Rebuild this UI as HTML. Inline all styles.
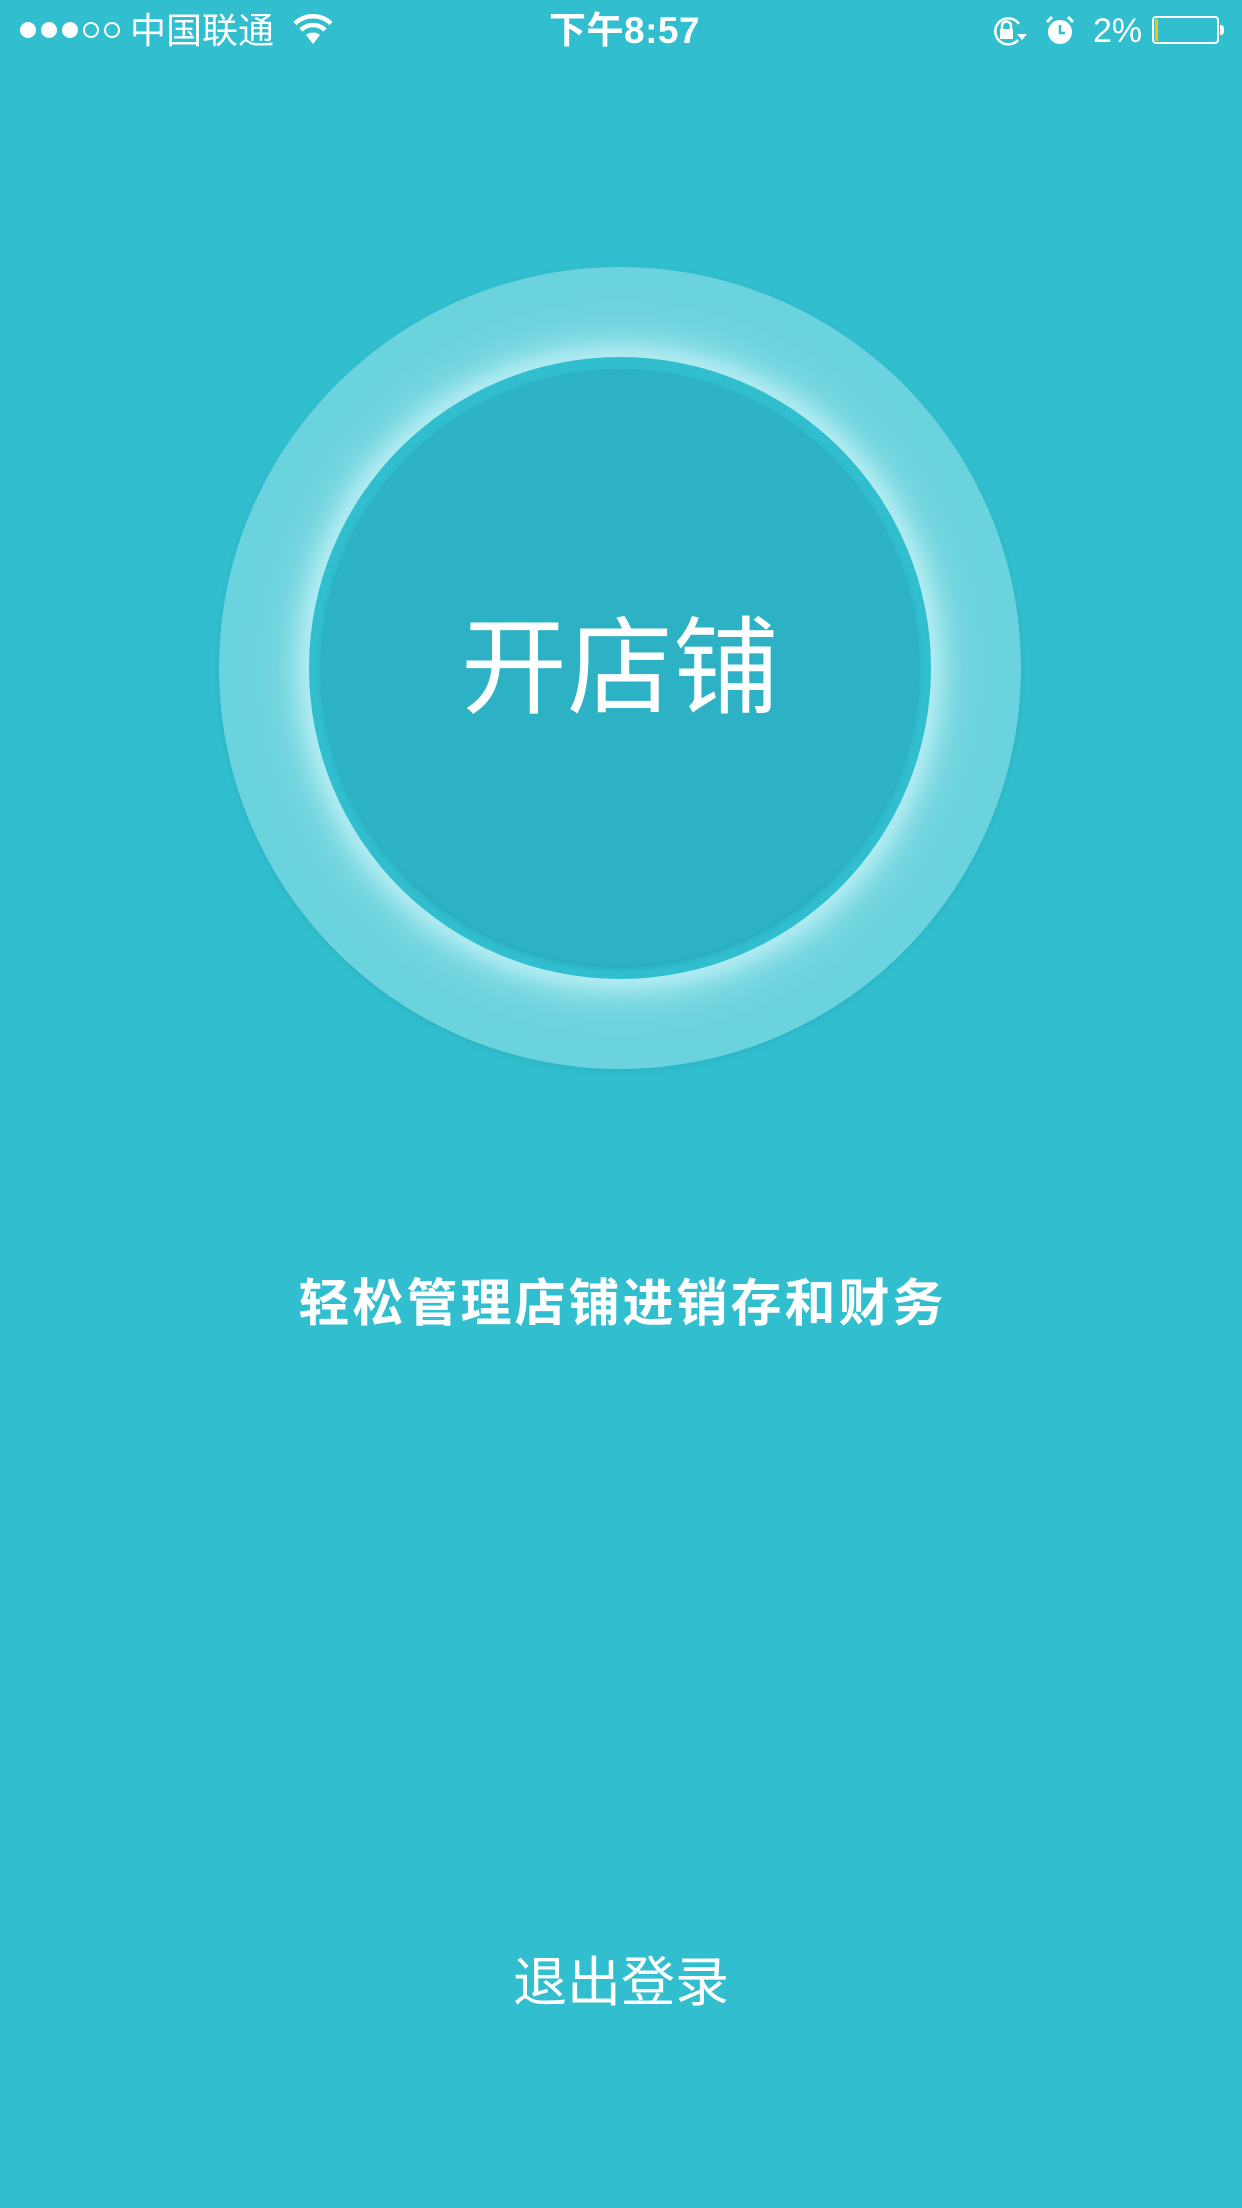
<!DOCTYPE html>
<html><head><meta charset="utf-8"><style>
html,body{margin:0;padding:0;}
body{width:1242px;height:2208px;background:#31bece;position:relative;overflow:hidden;font-family:"Liberation Sans","Noto Sans CJK SC",sans-serif;color:#fff;}
.abs{position:absolute;}
.dot{position:absolute;top:22px;width:16px;height:16px;border-radius:50%;box-sizing:border-box;}
.f{background:#fff;}
.e{border:2px solid #fff;}
</style></head><body>
<div class="dot f" style="left:20px"></div>
<div class="dot f" style="left:41px"></div>
<div class="dot f" style="left:62px"></div>
<div class="dot e" style="left:83px"></div>
<div class="dot e" style="left:104px"></div>
<div class="abs" style="left:130px;top:9px;font-size:36px;line-height:44px;">中国联通</div>
<svg class="abs" style="left:292px;top:14px" width="42" height="32" viewBox="0 0 42 32">
<path d="M21 30 L14 21 A11 11 0 0 1 28 21 Z" fill="#fff"/>
<path d="M9 16 A17 17 0 0 1 33 16" stroke="#fff" stroke-width="4.5" fill="none"/>
<path d="M3 9.5 A26 26 0 0 1 39 9.5" stroke="#fff" stroke-width="4.5" fill="none"/>
</svg>
<div class="abs" style="left:549px;top:9px;font-size:37px;line-height:44px;width:170px;font-weight:bold;letter-spacing:0.5px;">下午8:57</div>
<svg class="abs" style="left:990px;top:15px" width="38" height="32" viewBox="0 0 38 32">
<path d="M28 25 A13 13 0 1 1 29 9" stroke="#fff" stroke-width="2.5" fill="none"/>
<path d="M27 19 L37 19 L32 25 Z" fill="#fff"/>
<rect x="10" y="14" width="13" height="10" fill="#fff"/>
<path d="M12 14 V11 A4.5 4.5 0 0 1 21 11 V14" stroke="#fff" stroke-width="2.5" fill="none"/>
</svg>
<svg class="abs" style="left:1044px;top:15px" width="32" height="30" viewBox="0 0 32 30">
<circle cx="16" cy="17" r="12" fill="#fff"/>
<path d="M16 10 V18 H21" stroke="#31bece" stroke-width="2.5" fill="none"/>
<path d="M3 7 L8 2 M29 7 L24 2" stroke="#fff" stroke-width="3"/>
</svg>
<div class="abs" style="left:1093px;top:11px;font-size:34px;line-height:40px;">2%</div>
<div class="abs" style="left:1152px;top:16px;width:67px;height:28px;border:2px solid #fff;border-radius:4px;box-sizing:border-box;"></div>
<div class="abs" style="left:1155px;top:19px;width:3px;height:22px;background:#ffc107;"></div>
<div class="abs" style="left:1220px;top:25px;width:4px;height:10px;background:#fff;border-radius:0 3px 3px 0;"></div>

<div class="abs" style="left:219px;top:267px;width:802px;height:802px;border-radius:50%;background:#6bd3de;box-shadow:0 2px 6px rgba(0,120,140,0.15);"></div>
<div class="abs" style="left:309px;top:357px;width:622px;height:622px;border-radius:50%;background:#31bece;box-shadow:0 0 22px 10px #b8eef3, 0 0 50px 18px rgba(190,240,245,0.45);"></div>
<div class="abs" style="left:321px;top:369px;width:598px;height:596px;border-radius:50%;background:#2db1c4;box-shadow:0 3px 5px rgba(20,130,150,0.35);"></div>
<div class="abs" style="left:320px;top:602px;width:600px;text-align:center;font-size:106px;line-height:134px;">开店铺</div>

<div class="abs" style="left:0;top:1271px;width:1242px;text-align:center;font-size:51px;line-height:66px;font-weight:bold;letter-spacing:3px;text-indent:3px;">轻松管理店铺进销存和财务</div>
<div class="abs" style="left:0;top:1950px;width:1242px;text-align:center;font-size:54px;line-height:66px;">退出登录</div>
</body></html>
